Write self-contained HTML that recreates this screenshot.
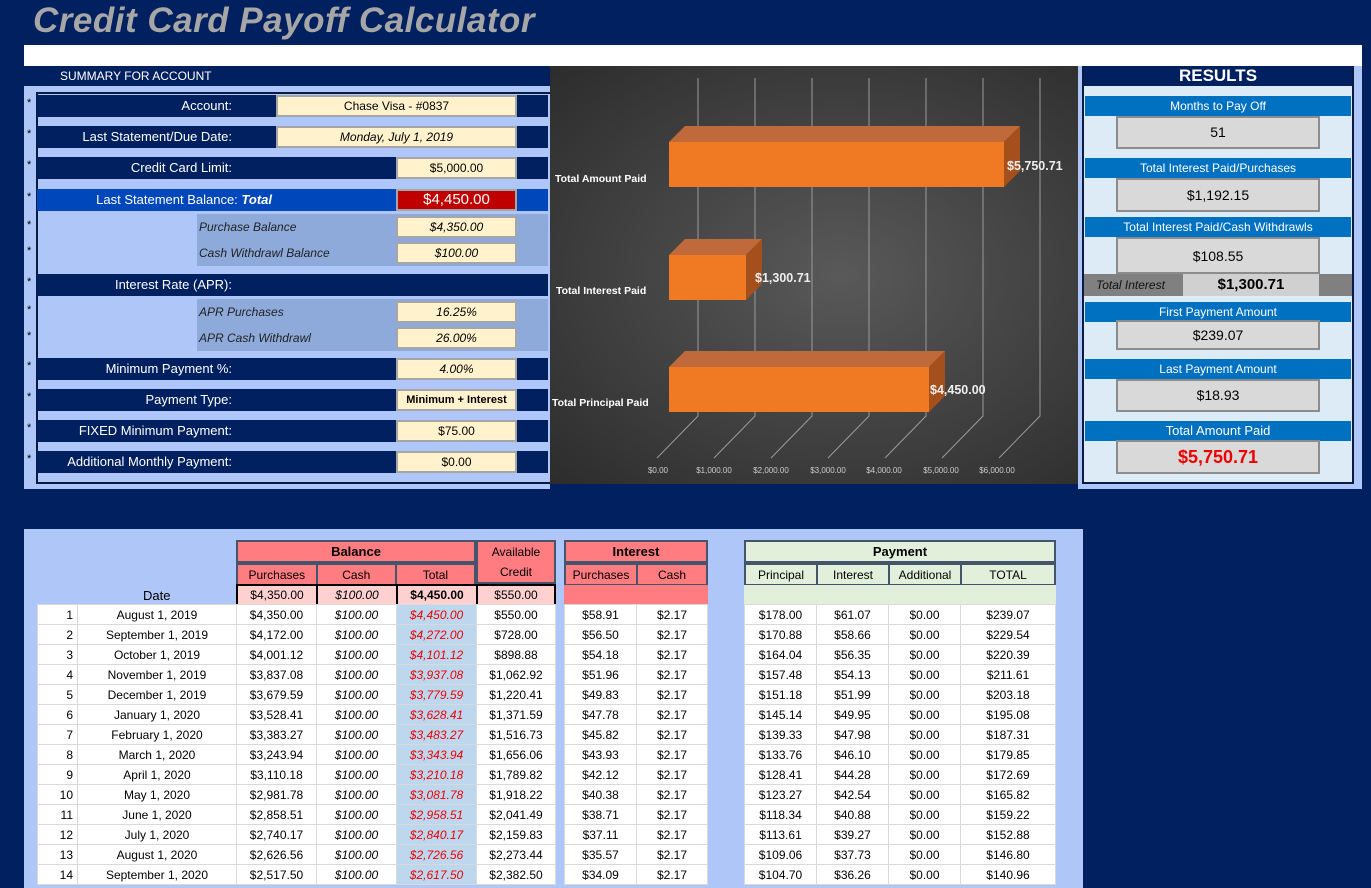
<!DOCTYPE html>
<html><head><meta charset="utf-8"><style>
*{margin:0;padding:0;box-sizing:border-box}
body{width:1371px;height:888px;background:#002060;font-family:"Liberation Sans",sans-serif;position:relative;overflow:hidden;font-size:12px}
.a{position:absolute}
.t{color:#a6a6a6;font-style:italic;font-weight:bold;font-size:35px;left:33px;top:1px;letter-spacing:.5px}
.lb{position:absolute;left:37px;width:511px;height:22px;background:#002060;color:#fff;font-size:13px;line-height:22px}
.lb span{position:absolute;right:316px}
.v{position:absolute;background:#fff2cc;border:2px solid #a6a6a6;height:22px;text-align:center;line-height:18px;font-size:12px;color:#000}
.st{position:absolute;left:27px;color:#000;font-size:11px}
.sub{position:absolute;left:197px;width:351px;height:26px;background:#8eaadb;font-style:italic;font-size:12px;line-height:26px;padding-left:2px;color:#222}
.rh{position:absolute;left:1085px;width:266px;height:20px;background:#0070c0;color:#fff;text-align:center;font-size:12px;line-height:20px}
.rv{position:absolute;left:1116px;width:204px;background:#d9d9d9;border:2px solid #8c8c8c;text-align:center;font-size:14px;color:#000}
table{position:absolute;border-collapse:collapse;font-size:12px}
td{height:20px;text-align:center;border:1px solid #d9d9d9;background:#fff;padding:0}
.hd td{background:#ff7c80;border:2px solid #44546a;font-size:12px}
.ph td{background:#e2efda;border:2px solid #44546a}
.i{font-style:italic}
.r{color:#e00;font-style:italic;background:#bdd7ee}
.n{text-align:right;padding-right:4px}
</style></head><body>
<div class="a t">Credit Card Payoff Calculator</div>
<div class="a" style="left:24px;top:45px;width:1338px;height:21px;background:#fff"></div>
<!-- left panel -->
<div class="a" style="left:24px;top:86px;width:526px;height:403px;background:#aec6f8"></div>
<div class="a" style="left:36px;top:92px;width:514px;height:392px;border:2px solid #0a1a40;border-right:none"></div>
<div class="a" style="left:60px;top:69px;color:#fff;font-size:12px">SUMMARY FOR ACCOUNT</div>
<div class="lb" style="top:95px"><span>Account:</span></div>
<div class="v" style="left:276px;top:95px;width:241px">Chase Visa - #0837</div>
<div class="lb" style="top:126px"><span>Last Statement/Due Date:</span></div>
<div class="v i" style="left:276px;top:126px;width:241px">Monday, July 1, 2019</div>
<div class="lb" style="top:157px"><span>Credit Card Limit:</span></div>
<div class="v" style="left:396px;top:157px;width:121px">$5,000.00</div>
<div class="lb" style="top:189px;background:#0047bb"><span style="right:276px">Last Statement Balance: <i style="font-weight:bold">Total</i></span></div>
<div class="v" style="left:396px;top:189px;width:121px;background:#c00000;color:#fff;font-size:15px">$4,450.00</div>
<div class="sub" style="top:214px">Purchase Balance</div>
<div class="v i" style="left:396px;top:216px;width:121px">$4,350.00</div>
<div class="sub" style="top:240px">Cash Withdrawl Balance</div>
<div class="v i" style="left:396px;top:242px;width:121px">$100.00</div>
<div class="lb" style="top:274px"><span>Interest Rate (APR):</span></div>
<div class="sub" style="top:299px">APR Purchases</div>
<div class="v i" style="left:396px;top:301px;width:121px">16.25%</div>
<div class="sub" style="top:325px">APR Cash Withdrawl</div>
<div class="v i" style="left:396px;top:327px;width:121px">26.00%</div>
<div class="lb" style="top:358px"><span>Minimum Payment %:</span></div>
<div class="v i" style="left:396px;top:358px;width:121px">4.00%</div>
<div class="lb" style="top:389px"><span>Payment Type:</span></div>
<div class="v" style="left:396px;top:389px;width:121px;font-size:11px;font-weight:bold">Minimum + Interest</div>
<div class="lb" style="top:420px"><span>FIXED Minimum Payment:</span></div>
<div class="v" style="left:396px;top:420px;width:121px">$75.00</div>
<div class="lb" style="top:451px"><span>Additional Monthly Payment:</span></div>
<div class="v" style="left:396px;top:451px;width:121px">$0.00</div>
<div class="st" style="top:97px">*</div><div class="st" style="top:128px">*</div><div class="st" style="top:159px">*</div><div class="st" style="top:191px">*</div><div class="st" style="top:219px">*</div><div class="st" style="top:245px">*</div><div class="st" style="top:276px">*</div><div class="st" style="top:304px">*</div><div class="st" style="top:330px">*</div><div class="st" style="top:360px">*</div><div class="st" style="top:391px">*</div><div class="st" style="top:422px">*</div><div class="st" style="top:453px">*</div>
<!-- chart -->
<div class="a" style="left:550px;top:66px;width:528px;height:418px;background:radial-gradient(ellipse at 55% 50%,#595959 0%,#3e3e3e 60%,#2c2c2c 100%)"></div>
<svg class="a" style="left:550px;top:66px" width="528" height="418">
<g stroke="#9a9a9a" stroke-width="1" fill="none">
<path d="M148 12V350L107 392M205 12V350L164 392M262 12V350L221 392M319 12V350L278 392M376 12V350L335 392M433 12V350L392 392M490 12V350L449 392"/>
</g>
<g>
<polygon points="119,76 135,60 470,60 454,76" fill="#c0693a"/><polygon points="454,76 470,60 470,105 454,121" fill="#a54f1c"/><rect x="119" y="76" width="335" height="45" fill="#f07a24"/>
<polygon points="119,189 135,173 212,173 196,189" fill="#c0693a"/><polygon points="196,189 212,173 212,218 196,234" fill="#a54f1c"/><rect x="119" y="189" width="77" height="45" fill="#f07a24"/>
<polygon points="119,301 135,285 395,285 379,301" fill="#c0693a"/><polygon points="379,301 395,285 395,330 379,346" fill="#a54f1c"/><rect x="119" y="301" width="260" height="45" fill="#f07a24"/>
</g>
<g fill="#fff" font-family="Liberation Sans" font-size="10.5" font-weight="bold">
<text x="5" y="116">Total Amount Paid</text><text x="6" y="228">Total Interest Paid</text><text x="2" y="340">Total Principal Paid</text></g>
<g fill="#eee" font-family="Liberation Sans" font-size="12.5" font-weight="bold">
<text x="457" y="104">$5,750.71</text><text x="205" y="216">$1,300.71</text><text x="380" y="328">$4,450.00</text></g>
<g fill="#ccc" font-family="Liberation Sans" font-size="8" text-anchor="middle">
<text x="108" y="407">$0.00</text><text x="164" y="407">$1,000.00</text><text x="221" y="407">$2,000.00</text><text x="278" y="407">$3,000.00</text><text x="334" y="407">$4,000.00</text><text x="391" y="407">$5,000.00</text><text x="447" y="407">$6,000.00</text></g>
</svg>
<!-- results -->
<div class="a" style="left:1078px;top:66px;width:284px;height:423px;background:#aec6f8"></div>
<div class="a" style="left:1082px;top:66px;width:272px;height:418px;background:#ddebf7;border:2px solid #0a1a40"></div>
<div class="a" style="left:1084px;top:66px;width:268px;height:20px;background:#002060;color:#fff;text-align:center;font-weight:bold;font-size:17px;line-height:20px">RESULTS</div>
<div class="rh" style="top:96px">Months to Pay Off</div>
<div class="rv" style="top:116px;height:33px;line-height:29px">51</div>
<div class="rh" style="top:158px">Total Interest Paid/Purchases</div>
<div class="rv" style="top:178px;height:34px;line-height:30px">$1,192.15</div>
<div class="rh" style="top:217px">Total Interest Paid/Cash Withdrawls</div>
<div class="rv" style="top:237px;height:37px;line-height:35px">$108.55</div>
<div class="a" style="left:1084px;top:274px;width:268px;height:22px;background:#808080"></div>
<div class="a i" style="left:1096px;top:278px;font-size:12px;color:#111">Total Interest</div>
<div class="a" style="left:1183px;top:274px;width:136px;height:22px;background:#d0d0d0;text-align:center;line-height:22px;font-weight:bold;font-size:15px">$1,300.71</div>
<div class="rh" style="top:302px">First Payment Amount</div>
<div class="rv" style="top:320px;height:30px;line-height:26px">$239.07</div>
<div class="rh" style="top:359px">Last Payment Amount</div>
<div class="rv" style="top:379px;height:33px;line-height:29px">$18.93</div>
<div class="rh" style="top:421px;font-size:13px">Total Amount Paid</div>
<div class="rv" style="top:440px;height:34px;line-height:30px;color:#e00;font-weight:bold;font-size:18px">$5,750.71</div>
<!-- table -->
<div class="a" style="left:24px;top:529px;width:1059px;height:359px;background:#aec6f8"></div>
<div class="a hd" style="left:236px;top:540px;width:240px;height:23px;background:#ff7c80;border:2px solid #44546a;text-align:center;font-weight:bold;font-size:13px;line-height:20px">Balance</div>
<div class="a" style="left:476px;top:540px;width:80px;height:44px;background:#ff7c80;border:2px solid #44546a;text-align:center;font-size:12px;line-height:20px">Available<br>Credit</div>
<div class="a" style="left:564px;top:540px;width:144px;height:23px;background:#ff7c80;border:2px solid #44546a;text-align:center;font-weight:bold;font-size:13px;line-height:20px">Interest</div>
<div class="a" style="left:744px;top:540px;width:312px;height:23px;background:#e2efda;border:2px solid #44546a;text-align:center;font-weight:bold;font-size:13px;line-height:20px">Payment</div>
<table style="left:236px;top:563px;width:240px" class="hd"><tr><td style="height:21px;width:80px">Purchases</td><td style="width:80px">Cash</td><td style="width:80px">Total</td></tr></table>
<table style="left:564px;top:563px;width:144px" class="hd"><tr><td style="height:21px;width:72px">Purchases</td><td>Cash</td></tr></table>
<table style="left:744px;top:563px;width:312px" class="ph"><tr><td style="height:21px;width:72px">Principal</td><td style="width:72px">Interest</td><td style="width:72px">Additional</td><td>TOTAL</td></tr></table>
<table style="left:236px;top:584px;width:320px"><tr><td style="height:20px;width:80px;background:#ffd0d0;border:2px solid #000">$4,350.00</td><td class="i" style="width:80px;background:#ffd0d0;border:2px solid #000">$100.00</td><td style="width:80px;background:#ffd0d0;border:2px solid #000;font-weight:bold">$4,450.00</td><td style="background:#ffd0d0;border:2px solid #000">$550.00</td></tr></table>
<div class="a" style="left:564px;top:585px;width:144px;height:19px;background:#ff7c80"></div>
<div class="a" style="left:744px;top:585px;width:312px;height:19px;background:#e2efda"></div>
<div class="a" style="left:143px;top:588px;font-size:13px">Date</div>
<table style="left:37px;top:604px;width:519px">
<tr><td class="n" style="width:40px">1</td><td style="width:159px">August 1, 2019</td><td style="width:80px">$4,350.00</td><td class="i" style="width:80px">$100.00</td><td class="r" style="width:80px">$4,450.00</td><td>$550.00</td></tr>
<tr><td class="n">2</td><td>September 1, 2019</td><td>$4,172.00</td><td class="i">$100.00</td><td class="r">$4,272.00</td><td>$728.00</td></tr>
<tr><td class="n">3</td><td>October 1, 2019</td><td>$4,001.12</td><td class="i">$100.00</td><td class="r">$4,101.12</td><td>$898.88</td></tr>
<tr><td class="n">4</td><td>November 1, 2019</td><td>$3,837.08</td><td class="i">$100.00</td><td class="r">$3,937.08</td><td>$1,062.92</td></tr>
<tr><td class="n">5</td><td>December 1, 2019</td><td>$3,679.59</td><td class="i">$100.00</td><td class="r">$3,779.59</td><td>$1,220.41</td></tr>
<tr><td class="n">6</td><td>January 1, 2020</td><td>$3,528.41</td><td class="i">$100.00</td><td class="r">$3,628.41</td><td>$1,371.59</td></tr>
<tr><td class="n">7</td><td>February 1, 2020</td><td>$3,383.27</td><td class="i">$100.00</td><td class="r">$3,483.27</td><td>$1,516.73</td></tr>
<tr><td class="n">8</td><td>March 1, 2020</td><td>$3,243.94</td><td class="i">$100.00</td><td class="r">$3,343.94</td><td>$1,656.06</td></tr>
<tr><td class="n">9</td><td>April 1, 2020</td><td>$3,110.18</td><td class="i">$100.00</td><td class="r">$3,210.18</td><td>$1,789.82</td></tr>
<tr><td class="n">10</td><td>May 1, 2020</td><td>$2,981.78</td><td class="i">$100.00</td><td class="r">$3,081.78</td><td>$1,918.22</td></tr>
<tr><td class="n">11</td><td>June 1, 2020</td><td>$2,858.51</td><td class="i">$100.00</td><td class="r">$2,958.51</td><td>$2,041.49</td></tr>
<tr><td class="n">12</td><td>July 1, 2020</td><td>$2,740.17</td><td class="i">$100.00</td><td class="r">$2,840.17</td><td>$2,159.83</td></tr>
<tr><td class="n">13</td><td>August 1, 2020</td><td>$2,626.56</td><td class="i">$100.00</td><td class="r">$2,726.56</td><td>$2,273.44</td></tr>
<tr><td class="n">14</td><td>September 1, 2020</td><td>$2,517.50</td><td class="i">$100.00</td><td class="r">$2,617.50</td><td>$2,382.50</td></tr>
</table>
<table style="left:564px;top:604px;width:144px">
<tr><td style="width:72px">$58.91</td><td>$2.17</td></tr><tr><td>$56.50</td><td>$2.17</td></tr><tr><td>$54.18</td><td>$2.17</td></tr><tr><td>$51.96</td><td>$2.17</td></tr><tr><td>$49.83</td><td>$2.17</td></tr><tr><td>$47.78</td><td>$2.17</td></tr><tr><td>$45.82</td><td>$2.17</td></tr><tr><td>$43.93</td><td>$2.17</td></tr><tr><td>$42.12</td><td>$2.17</td></tr><tr><td>$40.38</td><td>$2.17</td></tr><tr><td>$38.71</td><td>$2.17</td></tr><tr><td>$37.11</td><td>$2.17</td></tr><tr><td>$35.57</td><td>$2.17</td></tr><tr><td>$34.09</td><td>$2.17</td></tr>
</table>
<table style="left:744px;top:604px;width:312px">
<tr><td style="width:72px">$178.00</td><td style="width:72px">$61.07</td><td style="width:72px">$0.00</td><td>$239.07</td></tr>
<tr><td>$170.88</td><td>$58.66</td><td>$0.00</td><td>$229.54</td></tr>
<tr><td>$164.04</td><td>$56.35</td><td>$0.00</td><td>$220.39</td></tr>
<tr><td>$157.48</td><td>$54.13</td><td>$0.00</td><td>$211.61</td></tr>
<tr><td>$151.18</td><td>$51.99</td><td>$0.00</td><td>$203.18</td></tr>
<tr><td>$145.14</td><td>$49.95</td><td>$0.00</td><td>$195.08</td></tr>
<tr><td>$139.33</td><td>$47.98</td><td>$0.00</td><td>$187.31</td></tr>
<tr><td>$133.76</td><td>$46.10</td><td>$0.00</td><td>$179.85</td></tr>
<tr><td>$128.41</td><td>$44.28</td><td>$0.00</td><td>$172.69</td></tr>
<tr><td>$123.27</td><td>$42.54</td><td>$0.00</td><td>$165.82</td></tr>
<tr><td>$118.34</td><td>$40.88</td><td>$0.00</td><td>$159.22</td></tr>
<tr><td>$113.61</td><td>$39.27</td><td>$0.00</td><td>$152.88</td></tr>
<tr><td>$109.06</td><td>$37.73</td><td>$0.00</td><td>$146.80</td></tr>
<tr><td>$104.70</td><td>$36.26</td><td>$0.00</td><td>$140.96</td></tr>
</table>
</body></html>
